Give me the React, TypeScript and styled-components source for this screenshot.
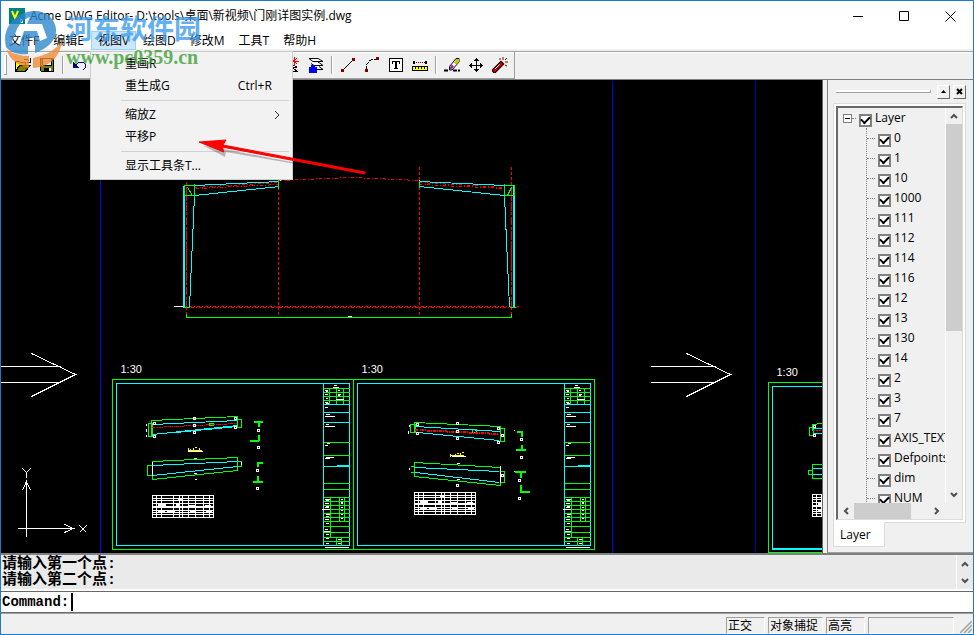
import React from 'react';
import styled, { createGlobalStyle, css } from 'styled-components';

const GlobalStyle = createGlobalStyle`
  * { box-sizing: border-box; }
  body {
    margin: 0;
    color: #000;
    font: 12px/16px "Open Sans", "Noto Sans CJK SC", sans-serif;
  }
  button, input { font: inherit; color: inherit; }
`;

const Window = styled.div`
  position: relative;
  display: flex;
  flex-direction: column;
  height: 100vh;
  min-height: 400px;
  overflow: hidden;
  border: 1px solid #1a7ad0;
  background: #f0f0f0;
`;

const TitleBar = styled.header`
  display: flex;
  align-items: center;
  flex: none;
  height: 30px;
  padding-left: 8px;
  gap: 5px;
  background: #fff;
`;

const Title = styled.h1`
  flex: 1;
  margin: 0;
  font-size: 12px;
  font-weight: 400;
  white-space: nowrap;
`;

const CaptionButtons = styled.div`
  display: flex;
`;

const CaptionButton = styled.button`
  display: grid;
  place-items: center;
  width: 46px;
  height: 28px;
  padding: 0;
  border: 0;
  background: none;
`;

const MenuBar = styled.nav`
  display: flex;
  flex: none;
  height: 18px;
  padding-left: 1px;
  background: #fff;
`;

const MenuSlot = styled.div`
  position: relative;
`;

const MenuButton = styled.button<{ $open?: boolean }>`
  display: block;
  height: 19px;
  padding: 0 6px;
  border: 1px solid ${p => (p.$open ? '#99d1ff' : 'transparent')};
  background: ${p => (p.$open ? '#cce8ff' : 'none')};
  line-height: 17px;
  white-space: nowrap;
`;

const Dropdown = styled.div`
  position: absolute;
  z-index: 3;
  top: 20px;
  left: -1px;
  width: 203px;
  padding: 1px 1px 2px;
  border: 1px solid #ccc;
  background: #f2f2f2;
`;

const DropdownItem = styled.button`
  display: flex;
  align-items: center;
  justify-content: space-between;
  width: 100%;
  height: 22px;
  padding: 0 19px 0 33px;
  border: 0;
  background: none;
  white-space: nowrap;
`;

const Submenu = styled.svg`
  margin-right: -9px;
`;

const DropdownRule = styled.hr`
  height: 1px;
  margin: 3px 2px 3px 29px;
  border: 0;
  background: #d2d2d2;
`;

const ToolBand = styled.div`
  flex: none;
  height: 31px;
  padding-top: 2px;
  border-bottom: 1px solid #808080;
`;

const Tools = styled.div`
  display: flex;
  width: max-content;
  min-width: 100%;
  height: 28px;
  border-top: 1px solid #a0a0a0;
  box-shadow: inset 0 1px #fff;
`;

const ToolSet = styled.div`
  display: flex;
  align-items: center;
  padding: 0 2px 0 3px;
  border: solid #a0a0a0;
  border-width: 0 1px 1px 0;
`;

const Grip = styled.span`
  width: 3px;
  height: 20px;
  margin-right: 4px;
  border: solid #a0a0a0;
  border-width: 0 1px 1px 0;
  background: #fff;
`;

const ToolGroup = styled.div<{ $room?: number }>`
  display: flex;
  min-width: ${p => (p.$room ? `${p.$room}px` : 'auto')};
`;

const ToolButton = styled.button`
  display: grid;
  place-items: center;
  width: 24px;
  height: 24px;
  padding: 0;
  border: 0;
  background: none;
`;

const ToolRule = styled.span`
  width: 2px;
  height: 18px;
  margin: 0 3px;
  border-left: 1px solid #a0a0a0;
  background: #fff;
`;

const Body = styled.main`
  display: flex;
  flex: 1;
  min-height: 0;
`;

const Viewport = styled.div`
  flex: 1;
  min-width: 0;
  overflow: hidden;
  border-right: 1px solid #696969;
  background: #000;
`;

const Drawing = styled.svg`
  display: block;
  width: 100%;
  height: 100%;
`;

const Dock = styled.aside`
  display: flex;
  flex-direction: column;
  flex: none;
  width: 146px;
  margin-left: 4px;
  padding: 4px 7px 5px 5px;
  border-left: 1px solid #808080;
  border-bottom: 1px solid #a0a0a0;
`;

const DockHeader = styled.div`
  display: flex;
  align-items: center;
  gap: 3px;
  height: 15px;
  padding-left: 3px;
`;

const DockGrip = styled.span`
  flex: 1;
  height: 3px;
  margin-right: 3px;
  border: solid #a0a0a0;
  border-width: 0 1px 1px 0;
  background: #fff;
`;

const DockButton = styled.button`
  display: grid;
  place-items: center;
  width: 13px;
  height: 14px;
  padding: 0;
  border: 1px solid;
  border-color: #fff #696969 #696969 #fff;
  background: #f0f0f0;
`;

const Page = styled.section`
  display: flex;
  flex: 1;
  min-height: 0;
  margin-top: 4px;
  padding: 2px;
  border: 1px solid #dcdcdc;
  background: #fff;
`;

const TreeFrame = styled.div`
  display: grid;
  grid-template: minmax(0, 1fr) 16px / minmax(0, 1fr) 17px;
  flex: 1;
  min-width: 0;
  border: 1px solid #dcdcdc;
  border-top: 2px solid #696969;
  border-left: 2px solid #696969;
  background: #f0f0f0;
`;

const Tree = styled.ul`
  margin: 0;
  padding: 0 0 0 5px;
  overflow: hidden;
  list-style: none;
`;

const Branch = styled.ul`
  margin: 0 0 0 23px;
  padding: 0;
  border-left: 1px dotted #808080;
  list-style: none;
`;

const Row = styled.div<{ $root?: boolean }>`
  display: flex;
  align-items: center;
  height: 20px;
  white-space: nowrap;
  &::before {
    content: '';
    flex: none;
    width: ${p => (p.$root ? '4px' : '8px')};
    margin-right: 3px;
    border-top: 1px dotted #808080;
    order: ${p => (p.$root ? 1 : 0)};
  }
`;

const Expander = styled.button`
  display: grid;
  place-items: center;
  width: 9px;
  height: 9px;
  padding: 0;
  border: 1px solid #808080;
  background: #fff;
  &::before {
    content: '';
    width: 5px;
    height: 1px;
    background: #000;
  }
`;

const CheckLabel = styled.label`
  display: flex;
  align-items: flex-start;
  gap: 3px;
  order: 2;
`;

const tick = css`
  &:checked::after {
    content: '';
    width: 7px;
    height: 4px;
    margin-top: -2px;
    border: solid #000;
    border-width: 0 0 2px 2px;
    transform: rotate(-45deg);
  }
`;

const Check = styled.input`
  appearance: none;
  display: grid;
  place-items: center;
  flex: none;
  width: 13px;
  height: 13px;
  margin: 4px 0 0;
  border: 2px solid #808080;
  background: #fff;
  ${tick}
`;

const ScrollBar = styled.div<{ $across?: boolean }>`
  display: flex;
  flex-direction: ${p => (p.$across ? 'row' : 'column')};
  min-height: 0;
  border-left: ${p => (p.$across ? '0' : '1px solid #fff')};
`;

const ScrollArrow = styled.button`
  display: grid;
  place-items: center;
  flex: none;
  width: 16px;
  height: 16px;
  padding: 0;
  border: 0;
  background: none;
`;

const ScrollTrack = styled.div<{ $across?: boolean }>`
  display: flex;
  flex-direction: ${p => (p.$across ? 'row' : 'column')};
  flex: 1;
`;

const ScrollThumb = styled.div<{ $share: number }>`
  flex: 0 0 ${p => p.$share}%;
  background: #cdcdcd;
`;

const Tab = styled.button`
  align-self: flex-start;
  height: 25px;
  margin-top: -1px;
  padding: 0 13px 0 6px;
  border: 1px solid #dcdcdc;
  border-top-color: #fff;
  background: #fff;
`;

const History = styled.div`
  display: flex;
  flex: none;
  height: 38px;
  border-top: 2px solid #808080;
  border-bottom: 2px solid #fff;
  background: #eaeaea;
`;

const Log = styled.div`
  flex: 1;
  padding: 2px 1px 0;
  font: bold 15px/16px "Liberation Mono", "Noto Sans CJK SC", monospace;
`;

const HistoryScroll = styled.div`
  display: flex;
  flex-direction: column;
  justify-content: space-between;
  padding-top: 1px;
  border-left: 1px solid #fff;
`;

const Prompt = styled.label`
  display: flex;
  align-items: center;
  flex: none;
  height: 22px;
  padding-left: 1px;
  border-top: 1px solid #696969;
  border-bottom: 1px solid #696969;
  background: #fff;
  font: bold 14px/18px "Liberation Mono", monospace;
`;

const PromptInput = styled.input`
  flex: 1;
  min-width: 0;
  height: 18px;
  margin-left: 2px;
  padding: 0 2px;
  border: 0;
  border-left: 2px solid #000;
  outline: 0;
  background: none;
`;

const StatusBar = styled.footer`
  display: flex;
  align-items: flex-end;
  justify-content: flex-end;
  flex: none;
  gap: 3px;
  height: 21px;
  border-top: 1px solid #a0a0a0;
  background: #f0f0f0;
`;

const Pane = styled.span<{ $width: number }>`
  width: ${p => p.$width}px;
  height: 17px;
  padding-left: 1px;
  border: 1px solid #fff;
  border-top-color: #a0a0a0;
  border-left-color: #a0a0a0;
  white-space: nowrap;
`;

const SizeGrip = styled.svg`
  width: 12px;
  height: 12px;
  margin: 0 1px 1px 3px;
`;

const Watermark = styled.div`
  position: absolute;
  z-index: 4;
  top: 10px;
  left: 3px;
  display: flex;
  gap: 2px;
  opacity: 0.78;
  pointer-events: none;
`;

const WatermarkText = styled.div`
  color: #3c9bee;
  font: bold 27px/34px "Noto Sans CJK SC", sans-serif;
`;

const WatermarkAddress = styled.div`
  color: #3b9f32;
  font: bold 20px/24px "Liberation Serif", serif;
`;

const Pointer = styled.svg`
  position: absolute;
  z-index: 5;
  top: 129px;
  left: 189px;
  pointer-events: none;
`;

const GREEN = '#00ff00';
const CYAN = '#00ffff';
const RED = '#ff0000';

type PathProps = { d: string; c: string; w?: number; dash?: string };
const P = ({ d, c, w = 1, dash }: PathProps) => (
  <path d={d} stroke={c} strokeWidth={w} strokeDasharray={dash} fill="none" />
);

const Nodes = ({ at }: { at: number[][] }) => (
  <P c="#fff" d={at.map(([x, y]) => `M${x - 1} ${y - 1}h2v2h-2z`).join('')} />
);

const TitleBlock = ({ x }: { x: number }) => (
  <g transform={`translate(${x} 0)`}>
    <P c={GREEN} d="M0 388h26M0 392h26M0 396h26M0 400h26M6 388v16M13 388v16M20 388v16M0 442h26M0 455h26M0 483h26M0 489h26M0 497h26M0 501h26M0 505h26M0 509h26M0 513h26M0 517h26M0 521h26M0 526h26M0 532h26M0 537h26M0 541h26M7 497v40M16 497v24M21 497v24M13 537v8M18 537v8" />
    <P c={CYAN} d="M0 383v162M0 404h26M0 412h26M0 422h26M0 466h26M13 465h13" />
    <P c="#fff" d="M10 385h3M9 387h6M1 390h3M2 391h2M1 394h3M2 398h2M1 402h3M2 403h3M14 390h2M14 394h3M14 395h2M12 399h8M1 407h3M2 414h4M1 416h10M2 424h3M1 426h10M3 443h3M1 445h3M2 457h8M1 458h5M1 499h5M2 500h3M1 503h4M2 506h3M1 507h4M-2 509h8M2 514h4M2 516h3M1 519h4M2 523h3M1 529h3M0 531h6M2 534h3M2 538h3M2 543h3M17 499h2M17 502h2M17 503h2M17 507h2M17 510h2M17 514h2M17 518h2M14 539h3M14 543h3M1 547h24" />
  </g>
);

const PartsTable = ({ x, y }: { x: number; y: number }) => (
  <g transform={`translate(${x} ${y})`}>
    <P c="#fff" d="M0 0h61v22h-61zM0 3h61M0 5h61M0 8h61M0 11h61M0 12h61M0 15h61M0 17h61M0 19h61M4 0v22M9 0v22M21 0v22M27 0v22M30 0v22M36 0v22M43 0v22M51 0v22M57 0v22" />
    <P c="#fff" w={2} d="M5 9h8M23 9h4M36 10h6M52 10h6M5 16h7M14 16h8M37 15h6M25 4h4M53 16h6" />
  </g>
);

const Scale = ({ x, y }: { x: number; y: number }) => (
  <text x={x} y={y} fill="#fff" fontFamily="Liberation Sans, sans-serif" fontSize="11">1:30</text>
);

const BigArrow = ({ x, stem, from }: { x: number; stem: number; from: number }) => (
  <P c="#fff" d={`M${from} 366H${stem}M${from} 382H${stem}M${x - 44} 353L${x} 374L${x - 44} 396`} />
);

const Model = () => (
  <Drawing aria-label="门刚详图" shapeRendering="crispEdges">
    <g transform="translate(-0.5 -79.5)">
      <P c="#0000ff" d="M100 80V2000M612 80V2000" />
      <P c="#0000b0" d="M755 80V2000" />
      <P c={RED} dash="3 2" d="M186 166V317M278 166V317M419 166V317M511 166V317" />
      <P c={RED} dash="3 2 1 2" d="M180 306H518M182 307H518M279 180L350 177L419 180M194 187L279 182M196 188L279 184M419 182L504 187M419 184L504 188" />
      <P c={CYAN} d="M183 185V307M184 185V307M514 184V307M513 185V307" />
      <P c={CYAN} d="M194 195L189 307M194 185L279 181M194 195L279 186M419 181L504 185M419 186L504 195M504 195L509 307" />
      <P c={RED} dash="8 2 2 2" d="M186 188V307M511 188V307" />
      <P c={GREEN} d="M184 185H194V195H184zM504 185H514V195H504zM187 187L192 195M511 187L507 195M278 179V188M419 179V187M194 183V197M504 183V197M183 307H189M509 307H515M186 313V317H511V313" />
      <P c="#fff" d="M173 306H182M347 316H351M279 180h1M418 180h1" />

      <BigArrow from={0} stem={60} x={75} />
      <BigArrow from={650} stem={715} x={730} />
      <P c="#fff" d="M26 536V481M22 490L26 481L30 490M17 528H73M64 524L73 528L64 532M22 468L26 472L30 468M26 472V477M79 525L86 532M86 525L79 532" />

      <Scale x={120} y={372} />
      <Scale x={361} y={372} />
      <Scale x={776} y={375} />

      <P c={GREEN} d="M112 379H594V549H112zM353 379V549" />
      <P c={CYAN} d="M116 383H349V545H116zM357 383H590V545H357z" />
      <TitleBlock x={323} />
      <TitleBlock x={564} />

      <P c={GREEN} d="M151 435V420L237 416V427M148 423H152V436H148zM237 419H241V427H237zM209 423h4v2h-4zM152 479V461L237 457V470L152 479M147 465H152V475H147zM237 461H241V466H237" />
      <P c={CYAN} d="M152 424L237 420M152 434L237 425M175 432L237 426M152 465L237 461M152 475L237 466" />
      <P c={RED} dash="3 1 1 1" d="M152 427L237 423" />
      <P c="#fff" d="M152 461V475M146 423v2M146 428v3M146 434v2M241 461v3M193 458h3M193 473h3M194 479h2" />
      <Nodes at={[[154, 423], [154, 436], [194, 418], [194, 425], [194, 432], [235, 418], [235, 427], [258, 430], [258, 447], [257, 470], [257, 488]]} />
      <P c={GREEN} w={2} d="M253 421H262M258 421V426M258 434V440M249 440H258M256 462H262M257 462V466M257 475V481M252 481H262" />
      <P c="#ffff00" d="M187 450H201M188 447v3M190 448v2M193 447v3M194 447h2M197 449v1M199 447v3" />
      <P c="#fff" d="M187 451H202" />
      <PartsTable x={152} y={495} />

      <P c={GREEN} d="M414 432V422L500 426V441M410 424H415V432H410zM500 428H504V441H500zM472 429h4v3h-4zM414 476V462L500 467V485L414 476M410 466H414V472H410M500 471H504V482H500" />
      <P c={CYAN} d="M415 426L500 431M417 432L499 440M415 467L499 471M415 472L499 482" />
      <P c={RED} dash="3 1 1 1" d="M415 429L499 433M415 430L499 434" />
      <P c="#fff" d="M500 465V482M409 424v2M408 430v3M456 463h3M456 479h3M409 467v2M513 430h1M513 471h1" />
      <Nodes at={[[417, 424], [417, 433], [457, 423], [457, 431], [457, 438], [498, 428], [498, 442], [502, 435], [502, 475], [521, 439], [521, 457], [519, 480], [519, 498], [457, 485]]} />
      <P c={GREEN} w={2} d="M516 431H521V436M521 444V449M515 449H525M514 471H525M520 471V477M520 484V491H529" />
      <P c="#ffff00" d="M450 455H463M450 453v3M453 454v2M455 453v3M456 453h2M460 452v3M461 452h2" />
      <P c="#fff" d="M451 456H465" />
      <PartsTable x={414} y={492} />

      <P c={GREEN} d="M1100 382H768V552H1100M822 423L812 424V430M809 427H813V435H809zM840 464H812V478H840M808 470H812V474H808z" />
      <P c={CYAN} d="M1100 386H772V549H1100M772 548H1100M812 428H840M812 433H840M812 468H840M812 474H840" />
      <P c={RED} dash="2 1" d="M812 430H840" />
      <Nodes at={[[814, 426], [814, 435]]} />
      <PartsTable x={812} y={494} />
    </g>
  </Drawing>
);

const px = { width: 16, height: 16, viewBox: '0 0 16 16', fill: 'none', shapeRendering: 'crispEdges' as const, 'aria-hidden': true };

const OpenIcon = () => (
  <svg {...px}><path d="M0 4h4l1 1h6v3h5l-5 7H0z" fill="#000" /><path d="M1 5h3l1 1h5v2H4l-3 5z" fill="#ff0" /><path d="M5 9h9l-4 5H2z" fill="#808000" /><path d="M9 2h3l2 2M15 1v4h-3" stroke="#000" /></svg>
);
const SaveIcon = () => (
  <svg {...px}><path d="M1 1h14v14H2l-1-1z" fill="#000" /><path d="M2 2h1v6l1 1h8l1-1V4h1v10H2z" fill="#808000" /><path d="M4 2h8v6H4z" fill="#f0f0f0" /><path d="M5 11h7v4H5z" fill="#000" /><path d="M10 11h2v3h-2z" fill="#fff" /></svg>
);
const UndoIcon = () => (
  <svg {...px}><path d="M5 8l3-3h4l2 2v4l-2 2" stroke="#000080" /><path d="M2 5v6h6z" fill="#000080" /></svg>
);
const NewLayerIcon = () => (
  <svg {...px}><path d="M1 8h8l4 2H4zM1 11h8l4 3H4z" stroke="#000" fill="#fff" /><path d="M10 0v9M5 4h10M7 1l6 6M13 1L7 7" stroke="red" /></svg>
);
const LayersIcon = () => (
  <svg {...px} shapeRendering="auto"><path d="M1 1.5h9l5 3H5zM10 5.5h1l4 3H6l-3-2M11 9.5l4 3H9" stroke="#000" fill="#fff" /><path d="M3 8h4v2h2v6H1v-6h2z" fill="#00f" /></svg>
);
const LineIcon = () => (
  <svg {...px}><path d="M3 13L13 3" stroke="#000" /><path d="M1 12h3v3H1zM12 1h3v3h-3z" fill="#800000" /></svg>
);
const ArcIcon = () => (
  <svg {...px}><path d="M2 13V9l3-5 4-2h4" stroke="#000" strokeDasharray="4 1" /><path d="M1 12h3v3H1zM12 0h3v3h-3z" fill="#800000" /></svg>
);
const TextIcon = () => (
  <svg {...px}><path d="M1.5 1.5h13v13h-13z" fill="#fff" stroke="#000" /><path d="M4 4h8v3h-1V5H9v6h1v1H6v-1h1V5H5v2H4z" fill="#000" /></svg>
);
const DimensionIcon = () => (
  <svg {...px}><path d="M1 4h2v3H1zM13 4h2v3h-2z" fill="#000" /><path d="M4 5.5h9" stroke="#800000" strokeDasharray="1 1" /><path d="M.5 9.5h15v4H.5z" fill="#ff0" stroke="#000" /><path d="M3.5 10v2M6.5 10v2M9.5 10v2M12.5 10v2" stroke="#000" /></svg>
);
const EraserIcon = () => (
  <svg {...px} shapeRendering="auto"><path d="M0 13.5h5M9 13.5h7" stroke="#000" strokeWidth="2" strokeDasharray="4 1" /><path d="M12 1.500h3V5l-7 8H5.500V9.500z" fill="#fff" stroke="#000" /><path d="M12.500 2H15v3l-2.500 2.500-2.500-2z" fill="#c4c400" /><path d="M8 7.500l2 2L7.500 12.500H6V10z" fill="#a020b0" /></svg>
);
const MoveIcon = () => (
  <svg {...px}><path d="M8 1h1v14H8zM1 8h14v1H1zM7 2h3v1H7zM6 3h5v1H6zM7 13h3v1H7zM6 12h5v1H6zM2 7h1v3H2zM3 6h1v5H3zM13 7h1v3h-1zM12 6h1v5h-1z" fill="#000" /></svg>
);
const WandIcon = () => (
  <svg {...px} shapeRendering="auto"><path d="M2.500 13.500L9 7" stroke="#000" strokeWidth="5" strokeLinecap="square" /><path d="M2.500 13.500L9 7" stroke="#d00000" strokeWidth="3" strokeLinecap="square" /><path d="M3 12l4.500-4.500" stroke="#fff" /><path d="M8 1v2M11 0v3M15 1l-2 2M13 5h3M13 8l2 1" stroke="#800000" /></svg>
);

const Chevron = ({ turn = 0 }: { turn?: number }) => (
  <svg width="10" height="10" viewBox="0 0 10 10" fill="none" aria-hidden="true">
    <path d="M2 7L5 4L8 7" stroke="#505050" strokeWidth="2" transform={`rotate(${turn} 5 5)`} />
  </svg>
);

const layers = ['0', '1', '10', '1000', '111', '112', '114', '116', '12', '13', '130', '14', '2', '3', '7', 'AXIS_TEXT', 'Defpoints', 'dim', 'NUM'];

const LayerCheck = ({ name }: { name: string }) => (
  <CheckLabel><Check type="checkbox" defaultChecked />{name}</CheckLabel>
);

const Tool = ({ label, children }: { label: string; children: React.ReactNode }) => (
  <ToolButton aria-label={label}>{children}</ToolButton>
);

export default function App() {
  return (
    <Window>
      <GlobalStyle />
      <TitleBar>
        <svg width="16" height="16" viewBox="0 0 16 16" aria-hidden="true">
          <path d="M0 0h16v16H0z" fill="#008080" />
          <path d="M3 3l3 7 3-7" fill="none" stroke="#ff0" strokeWidth="2" />
          <path d="M11.5 11.5h2v3h-2z" fill="none" stroke="#fff" />
        </svg>
        <Title>Acme DWG Editor- D:\tools\桌面\新视频\门刚详图实例.dwg</Title>
        <CaptionButtons>
          <CaptionButton aria-label="最小化"><svg width="11" height="11"><path d="M0 5.5h10" stroke="#000" shapeRendering="crispEdges" /></svg></CaptionButton>
          <CaptionButton aria-label="最大化"><svg width="11" height="11"><path d="M.5.5h9v9h-9z" stroke="#000" fill="none" /></svg></CaptionButton>
          <CaptionButton aria-label="关闭"><svg width="11" height="11"><path d="M.5.5l10 10M10.5.5l-10 10" stroke="#000" /></svg></CaptionButton>
        </CaptionButtons>
      </TitleBar>

      <MenuBar>
        <MenuSlot><MenuButton>文件F</MenuButton></MenuSlot>
        <MenuSlot><MenuButton>编辑E</MenuButton></MenuSlot>
        <MenuSlot>
          <MenuButton $open aria-expanded="true">视图V</MenuButton>
          <Dropdown role="menu">
            <DropdownItem role="menuitem">重画R</DropdownItem>
            <DropdownItem role="menuitem"><span>重生成G</span><span>Ctrl+R</span></DropdownItem>
            <DropdownRule />
            <DropdownItem role="menuitem">
              <span>缩放Z</span>
              <Submenu width="8" height="10" viewBox="0 0 8 10" aria-hidden="true"><path d="M2 1l4 4-4 4" fill="none" stroke="#333" /></Submenu>
            </DropdownItem>
            <DropdownItem role="menuitem">平移P</DropdownItem>
            <DropdownRule />
            <DropdownItem role="menuitem">显示工具条T...</DropdownItem>
          </Dropdown>
        </MenuSlot>
        {['绘图D', '修改M', '工具T', '帮助H'].map(name => (
          <MenuSlot key={name}><MenuButton>{name}</MenuButton></MenuSlot>
        ))}
      </MenuBar>

      <ToolBand>
        <Tools>
          <ToolSet>
            <Grip />
            <ToolGroup>
              <Tool label="打开"><OpenIcon /></Tool>
              <Tool label="保存"><SaveIcon /></Tool>
            </ToolGroup>
            <ToolRule />
            <ToolGroup $room={213}>
              <Tool label="撤销"><UndoIcon /></Tool>
            </ToolGroup>
            <ToolGroup>
              <Tool label="新建图层"><NewLayerIcon /></Tool>
              <Tool label="图层"><LayersIcon /></Tool>
            </ToolGroup>
            <ToolRule />
            <ToolGroup>
              <Tool label="直线"><LineIcon /></Tool>
              <Tool label="圆弧"><ArcIcon /></Tool>
              <Tool label="文字"><TextIcon /></Tool>
              <Tool label="标注"><DimensionIcon /></Tool>
            </ToolGroup>
            <ToolRule />
            <ToolGroup>
              <Tool label="删除"><EraserIcon /></Tool>
              <Tool label="移动"><MoveIcon /></Tool>
              <Tool label="分解"><WandIcon /></Tool>
            </ToolGroup>
          </ToolSet>
        </Tools>
      </ToolBand>

      <Body>
        <Viewport><Model /></Viewport>
        <Dock>
          <DockHeader>
            <DockGrip />
            <DockButton aria-label="折叠"><svg width="5" height="3" viewBox="0 0 5 3"><path d="M0 3L2.5 0L5 3z" /></svg></DockButton>
            <DockButton aria-label="关闭面板"><svg width="7" height="7" viewBox="0 0 7 7"><path d="M1 1l5 5M6 1L1 6" stroke="#000" strokeWidth="2" /></svg></DockButton>
          </DockHeader>
          <Page>
            <TreeFrame>
              <Tree>
                <li>
                  <Row $root><Expander aria-label="收起" /><LayerCheck name="Layer" /></Row>
                  <Branch>
                    {layers.map(name => <li key={name}><Row><LayerCheck name={name} /></Row></li>)}
                  </Branch>
                </li>
              </Tree>
              <ScrollBar>
                <ScrollArrow aria-label="向上"><Chevron /></ScrollArrow>
                <ScrollTrack><ScrollThumb $share={57} /></ScrollTrack>
                <ScrollArrow aria-label="向下"><Chevron turn={180} /></ScrollArrow>
              </ScrollBar>
              <ScrollBar $across>
                <ScrollArrow aria-label="向左"><Chevron turn={-90} /></ScrollArrow>
                <ScrollTrack $across><ScrollThumb $share={76} /></ScrollTrack>
                <ScrollArrow aria-label="向右"><Chevron turn={90} /></ScrollArrow>
              </ScrollBar>
            </TreeFrame>
          </Page>
          <Tab>Layer</Tab>
        </Dock>
      </Body>

      <History>
        <Log>
          <div>请输入第一个点:</div>
          <div>请输入第二个点:</div>
        </Log>
        <HistoryScroll>
          <ScrollArrow aria-label="上一行"><Chevron /></ScrollArrow>
          <ScrollArrow aria-label="下一行"><Chevron turn={180} /></ScrollArrow>
        </HistoryScroll>
      </History>
      <Prompt>Command:<PromptInput type="text" /></Prompt>

      <StatusBar>
        <Pane $width={39}>正交</Pane>
        <Pane $width={55}>对象捕捉</Pane>
        <Pane $width={39}>高亮</Pane>
        <Pane $width={86} />
        <SizeGrip viewBox="0 0 12 12" aria-hidden="true"><path d="M0 12L12 0M4 12L12 4M8 12L12 8" stroke="#a0a0a0" strokeWidth="1.5" /></SizeGrip>
      </StatusBar>

      <Watermark>
        <svg width="60" height="58" viewBox="0 0 60 58" aria-hidden="true">
          <path d="M3 39C4 44 8 49 14 53L25 57V45C17 45 10 43 3 39zM29 57V47C43 44 53 38 58 30C56 46 46 56 29 57z" fill="#f18a35" />
          <path d="M2 36C-3 16 13 0 31 0C43 0 51 8 52 18C53 29 43 38 31 42V27H24V43C15 44 7 42 2 36zM13 18L8 31L15 35L20 20H33L36 30L43 27L38 13H23L26 6C20 8 16 12 13 18z" fill="#2b86cd" fillRule="evenodd" />
        </svg>
        <div>
          <WatermarkText>河东软件园</WatermarkText>
          <WatermarkAddress>www.pc0359.cn</WatermarkAddress>
        </div>
      </Watermark>
      <Pointer width="185" height="60" viewBox="190 130 185 60" aria-hidden="true">
        <path d="M204 146L226 147L224 149L364 176L226 152L225 157z" fill="#000" opacity="0.25" />
        <path d="M199 142L226 140L223 145L365 172L365 174L222 147L224 152z" fill="#f00" stroke="#f00" />
      </Pointer>
    </Window>
  );
}
